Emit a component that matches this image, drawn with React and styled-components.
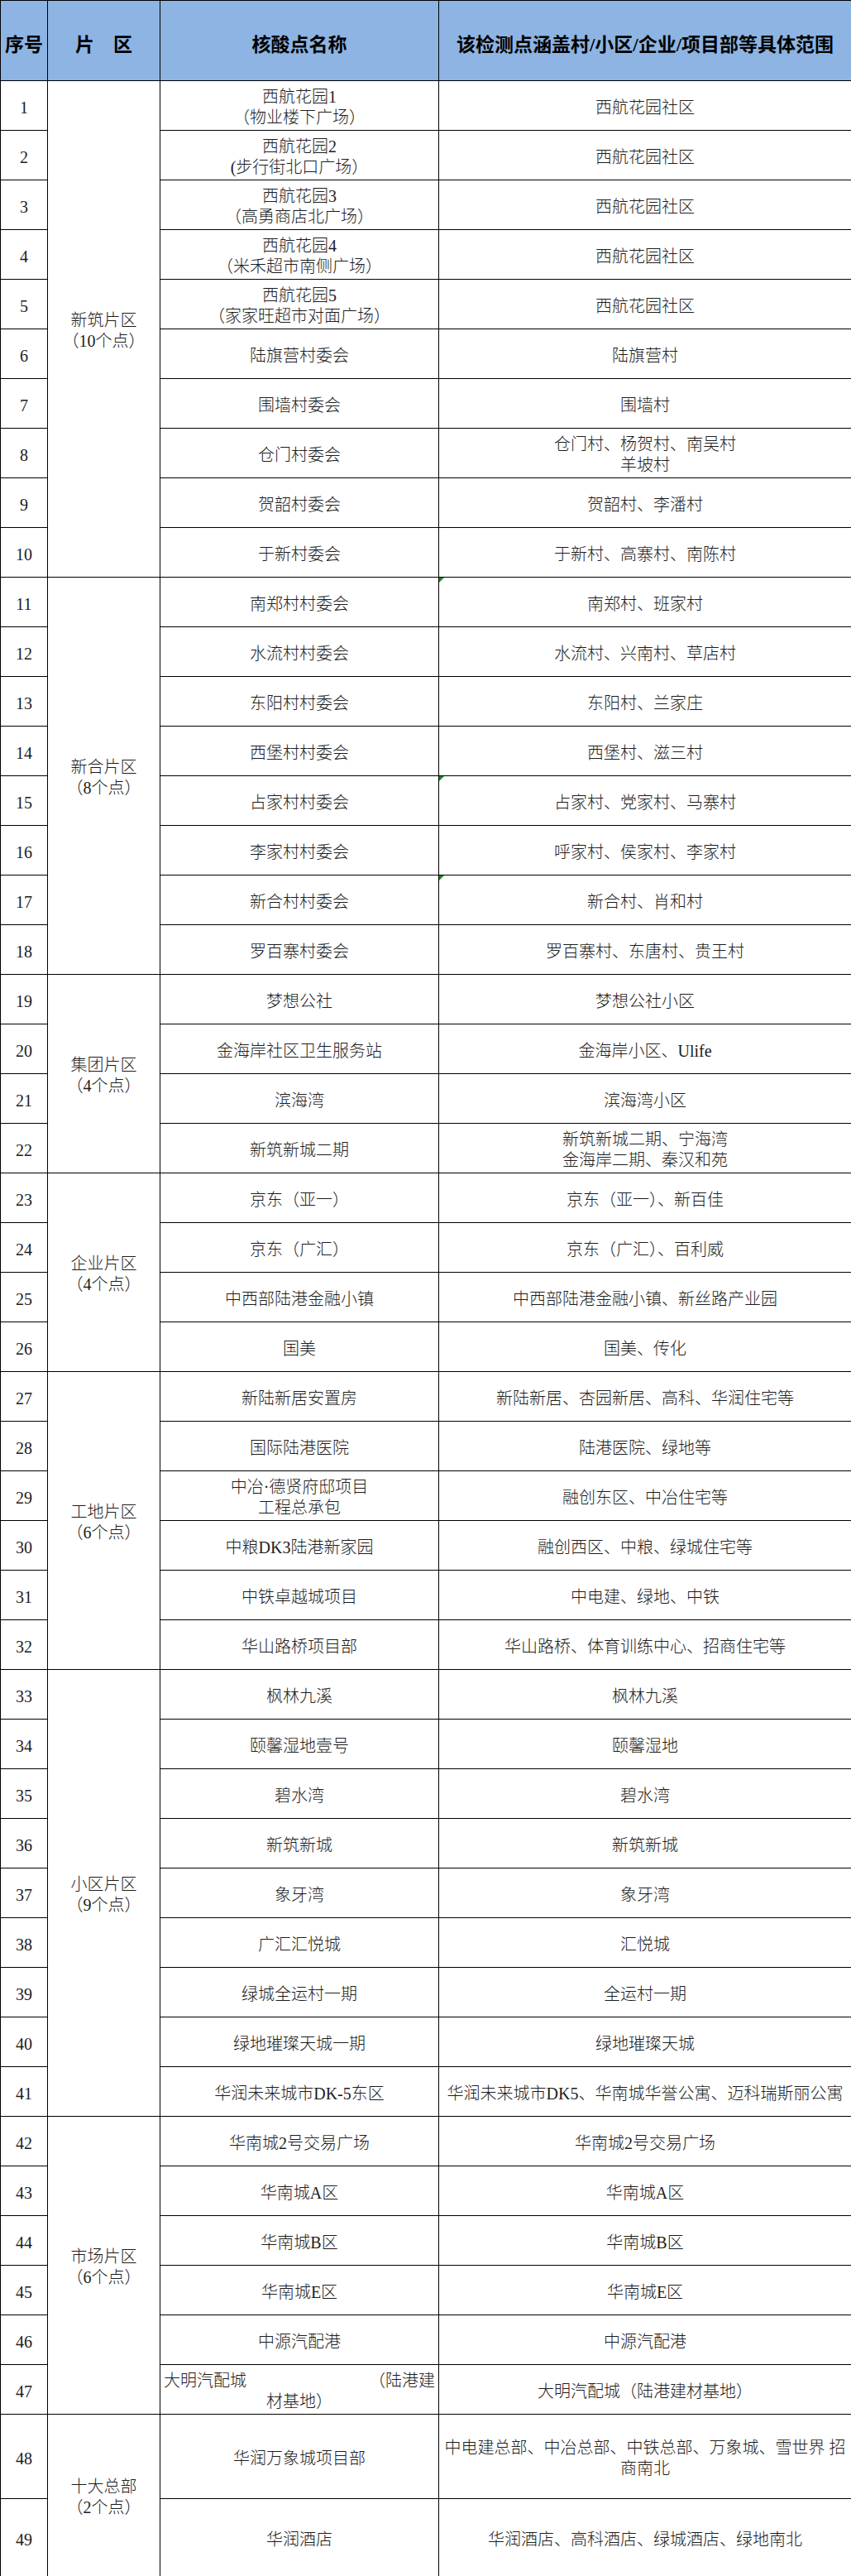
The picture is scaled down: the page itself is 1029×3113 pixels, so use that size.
import { createGlobalStyle, styled } from "styled-components";

const GlobalStyle = createGlobalStyle`
  body {
    margin: 0;
    background: #fff;
  }
`;

const Sheet = styled.table`
  width: 1029px;
  table-layout: fixed;
  border-collapse: collapse;
  font-family: "Liberation Serif", "Noto Sans CJK SC", serif;
  color: #1c1c1c;
`;

const HeadRow = styled.tr`
  height: 97px;
`;

const BodyRow = styled.tr`
  height: ${(p) => p.$h}px;
`;

const HeadCell = styled.th`
  padding: 6px 0 0;
  background: #8db4e2;
  border: 1px solid #000;
  font-size: 23px;
  font-weight: 700;
  text-align: center;
  vertical-align: middle;
  color: #000;
  white-space: nowrap;
  overflow: hidden;
`;

const Cell = styled.td`
  position: relative;
  padding: 5px 4px 0;
  border: 1px solid #000;
  font-size: 20px;
  font-weight: 300;
  line-height: 25px;
  text-align: ${(p) => (p.$left ? "left" : "center")};
  vertical-align: middle;

  ${(p) =>
    p.$flag &&
    `
    &::before {
      content: "";
      position: absolute;
      left: 0;
      top: 0;
      border-top: 6px solid #1a8a1a;
      border-right: 6px solid transparent;
    }
  `}
`;

const NumCell = styled(Cell)`
  padding-left: 0;
  padding-right: 0;
`;

const Line = styled.div`
  white-space: nowrap;
`;

const CenterLine = styled(Line)`
  text-align: center;
`;

const SpreadLine = styled.div`
  display: flex;
  justify-content: space-between;
  white-space: nowrap;
`;

const groups = [
  {
    zone: ["新筑片区", "（10个点）"],
    rows: [
      [["西航花园1", "（物业楼下广场）"], ["西航花园社区"]],
      [["西航花园2", "(步行街北口广场）"], ["西航花园社区"]],
      [["西航花园3", "（高勇商店北广场）"], ["西航花园社区"]],
      [["西航花园4", "（米禾超市南侧广场）"], ["西航花园社区"]],
      [["西航花园5", "（家家旺超市对面广场）"], ["西航花园社区"]],
      [["陆旗营村委会"], ["陆旗营村"]],
      [["围墙村委会"], ["围墙村"]],
      [["仓门村委会"], ["仓门村、杨贺村、南吴村", "羊坡村"]],
      [["贺韶村委会"], ["贺韶村、李潘村"]],
      [["于新村委会"], ["于新村、高寨村、南陈村"]],
    ],
  },
  {
    zone: ["新合片区", "（8个点）"],
    rows: [
      [["南郑村村委会"], ["南郑村、班家村"], true],
      [["水流村村委会"], ["水流村、兴南村、草店村"]],
      [["东阳村村委会"], ["东阳村、兰家庄"]],
      [["西堡村村委会"], ["西堡村、滋三村"]],
      [["占家村村委会"], ["占家村、党家村、马寨村"], true],
      [["李家村村委会"], ["呼家村、侯家村、李家村"]],
      [["新合村村委会"], ["新合村、肖和村"], true],
      [["罗百寨村委会"], ["罗百寨村、东唐村、贵王村"]],
    ],
  },
  {
    zone: ["集团片区", "（4个点）"],
    rows: [
      [["梦想公社"], ["梦想公社小区"]],
      [["金海岸社区卫生服务站"], ["金海岸小区、Ulife"]],
      [["滨海湾"], ["滨海湾小区"]],
      [["新筑新城二期"], ["新筑新城二期、宁海湾", "金海岸二期、秦汉和苑"]],
    ],
  },
  {
    zone: ["企业片区", "（4个点）"],
    rows: [
      [["京东（亚一）"], ["京东（亚一）、新百佳"]],
      [["京东（广汇）"], ["京东（广汇）、百利威"]],
      [["中西部陆港金融小镇"], ["中西部陆港金融小镇、新丝路产业园"]],
      [["国美"], ["国美、传化"]],
    ],
  },
  {
    zone: ["工地片区", "（6个点）"],
    rows: [
      [["新陆新居安置房"], ["新陆新居、杏园新居、高科、华润住宅等"]],
      [["国际陆港医院"], ["陆港医院、绿地等"]],
      [["中冶·德贤府邸项目", "工程总承包"], ["融创东区、中冶住宅等"]],
      [["中粮DK3陆港新家园"], ["融创西区、中粮、绿城住宅等"]],
      [["中铁卓越城项目"], ["中电建、绿地、中铁"]],
      [["华山路桥项目部"], ["华山路桥、体育训练中心、招商住宅等"]],
    ],
  },
  {
    zone: ["小区片区", "（9个点）"],
    rows: [
      [["枫林九溪"], ["枫林九溪"]],
      [["颐馨湿地壹号"], ["颐馨湿地"]],
      [["碧水湾"], ["碧水湾"]],
      [["新筑新城"], ["新筑新城"]],
      [["象牙湾"], ["象牙湾"]],
      [["广汇汇悦城"], ["汇悦城"]],
      [["绿城全运村一期"], ["全运村一期"]],
      [["绿地璀璨天城一期"], ["绿地璀璨天城"]],
      [["华润未来城市DK-5东区"], ["华润未来城市DK5、华南城华誉公寓、迈科瑞斯丽公寓"]],
    ],
  },
  {
    zone: ["市场片区", "（6个点）"],
    rows: [
      [["华南城2号交易广场"], ["华南城2号交易广场"]],
      [["华南城A区"], ["华南城A区"]],
      [["华南城B区"], ["华南城B区"]],
      [["华南城E区"], ["华南城E区"]],
      [["中源汽配港"], ["中源汽配港"]],
      ["spread", ["大明汽配城（陆港建材基地）"]],
    ],
  },
  {
    zone: ["十大总部", "（2个点）"],
    rows: [
      [["华润万象城项目部"], ["中电建总部、中冶总部、中铁总部、万象城、雪世界 招", "商南北"]],
      [["华润酒店"], ["华润酒店、高科酒店、绿城酒店、绿地南北"]],
    ],
  },
];

const rowHeights = { 48: 102, 49: 94 };

function Lines({ lines }) {
  return lines.map((text) => <Line key={text}>{text}</Line>);
}

function NameCell({ name }) {
  // 大明汽配城 row: Excel spread the text over a wide gap and wrapped it
  if (name === "spread") {
    return (
      <Cell $left>
        <SpreadLine>
          <span>大明汽配城</span>
          <span>（陆港建</span>
        </SpreadLine>
        <CenterLine>材基地）</CenterLine>
      </Cell>
    );
  }
  return (
    <Cell>
      <Lines lines={name} />
    </Cell>
  );
}

export default function App() {
  let index = 0;
  return (
    <>
      <GlobalStyle />
      <Sheet>
        <colgroup>
          <col style={{ width: 57 }} />
          <col style={{ width: 136 }} />
          <col style={{ width: 337 }} />
          <col style={{ width: 499 }} />
        </colgroup>
        <thead>
          <HeadRow>
            <HeadCell>序号</HeadCell>
            <HeadCell>片　区</HeadCell>
            <HeadCell>核酸点名称</HeadCell>
            <HeadCell>该检测点涵盖村/小区/企业/项目部等具体范围</HeadCell>
          </HeadRow>
        </thead>
        <tbody>
          {groups.map((group) =>
            group.rows.map(([name, scope, flag], i) => {
              index += 1;
              return (
                <BodyRow key={index} $h={rowHeights[index] || 60}>
                  <NumCell>{index}</NumCell>
                  {i === 0 && (
                    <Cell rowSpan={group.rows.length}>
                      <Lines lines={group.zone} />
                    </Cell>
                  )}
                  <NameCell name={name} />
                  <Cell $flag={flag}>
                    <Lines lines={scope} />
                  </Cell>
                </BodyRow>
              );
            })
          )}
        </tbody>
      </Sheet>
    </>
  );
}
